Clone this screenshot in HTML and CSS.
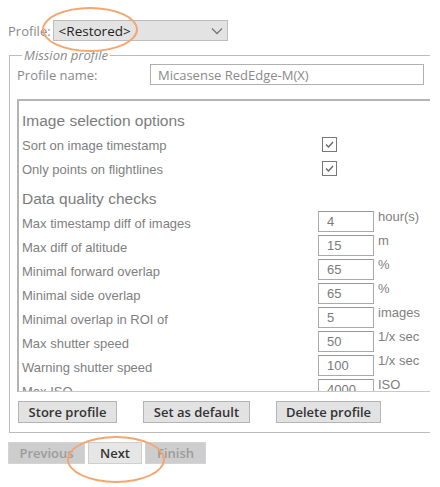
FILE: index.html
```html
<!DOCTYPE html>
<html lang="en">

<head>
    <meta charset="UTF-8">
    <title>Mission profile</title>
    <link rel="stylesheet" href="styles.css">
</head>

<body>
    <div class="page">
        <div class="profile-row">
            <label>Profile:</label>
            <div class="select">
                <span>&lt;Restored&gt;</span>
                <svg width="12" height="8" viewBox="0 0 12 8"><path d="M1 1.5 L6 6.5 L11 1.5" fill="none" stroke="#777" stroke-width="1.3"/></svg>
            </div>
        </div>

        <fieldset class="mission">
            <legend>Mission profile</legend>
            <div class="name-row">
                <label>Profile name:</label>
                <input class="name-input" value="Micasense RedEdge-M(X)">
            </div>

            <div class="panel">
                <h3>Image selection options</h3>
                <div class="row">
                    <span class="label">Sort on image timestamp</span>
                    <span class="check"><svg width="13" height="13" viewBox="0 0 13 13"><path d="M3 6.5 L5.5 9 L10 4" fill="none" stroke="#666" stroke-width="1.3"/></svg></span>
                </div>
                <div class="row">
                    <span class="label">Only points on flightlines</span>
                    <span class="check"><svg width="13" height="13" viewBox="0 0 13 13"><path d="M3 6.5 L5.5 9 L10 4" fill="none" stroke="#666" stroke-width="1.3"/></svg></span>
                </div>

                <h3 class="second">Data quality checks</h3>
                <div class="row">
                    <span class="label">Max timestamp diff of images</span>
                    <input class="num" value="4"><span class="unit">hour(s)</span>
                </div>
                <div class="row">
                    <span class="label">Max diff of altitude</span>
                    <input class="num" value="15"><span class="unit">m</span>
                </div>
                <div class="row">
                    <span class="label">Minimal forward overlap</span>
                    <input class="num" value="65"><span class="unit">%</span>
                </div>
                <div class="row">
                    <span class="label">Minimal side overlap</span>
                    <input class="num" value="65"><span class="unit">%</span>
                </div>
                <div class="row">
                    <span class="label">Minimal overlap in ROI of</span>
                    <input class="num" value="5"><span class="unit">images</span>
                </div>
                <div class="row">
                    <span class="label">Max shutter speed</span>
                    <input class="num" value="50"><span class="unit">1/x sec</span>
                </div>
                <div class="row">
                    <span class="label">Warning shutter speed</span>
                    <input class="num" value="100"><span class="unit">1/x sec</span>
                </div>
                <div class="row">
                    <span class="label">Max ISO</span>
                    <input class="num" value="4000"><span class="unit">ISO</span>
                </div>
            </div>

            <div class="actions">
                <button class="store">Store profile</button>
                <button class="default">Set as default</button>
                <button class="delete">Delete profile</button>
            </div>
        </fieldset>

        <div class="nav">
            <button class="prev" disabled>Previous</button>
            <button class="next">Next</button>
            <button class="finish" disabled>Finish</button>
        </div>

        <div class="mark mark-profile"></div>
        <div class="mark mark-next"></div>
    </div>
</body>

</html>
```

FILE: styles.css
```css
* {
    box-sizing: border-box;
}

body {
    margin: 0;
    background: #fff;
    font-family: 'Open Sans', sans-serif;
}

.page {
    position: relative;
    width: 430px;
    height: 487px;
    overflow: hidden;
    padding: 20px 0 0 8px;
}

.profile-row {
    display: flex;
    align-items: center;
    gap: 2px;
    height: 21px;

    label {
        font-size: 13px;
        color: #8a8a8a;
    }

    .select {
        display: flex;
        align-items: center;
        justify-content: space-between;
        width: 175px;
        height: 21px;
        padding: 0 4px 0 5px;
        background: #e3e3e3;
        border: 1px solid #bdbdbd;
        font-size: 13.5px;
        color: #222;
    }
}

.mission {
    margin: 7px -20px 0 1px;
    padding: 2px 0 9px 7px;
    border: 1px solid #bcbcbc;
    box-shadow: inset 1px 1px 0 #fff;

    legend {
        margin-left: 5px;
        padding: 0 2px;
        font-size: 13px;
        font-style: italic;
        color: #8a8a8a;
        line-height: 14px;
    }
}

.name-row {
    display: flex;
    align-items: center;
    height: 21px;

    label {
        width: 133px;
        font-size: 13px;
        color: #8a8a8a;
    }
}

.name-input {
    width: 274px;
    height: 21px;
    padding: 0 7px;
    border: 1px solid #b0b0b0;
    font-family: 'Open Sans', sans-serif;
    font-size: 13px;
    color: #8a8a8a;
}

.panel {
    height: 293px;
    margin-top: 14px;
    margin-right: -10px;
    padding: 8px 0 0 3px;
    overflow: hidden;
    border: 2px solid #b4b4b4;
    border-right-color: #ddd;
    border-bottom: 1px solid #c8c8c8;
    font-family: 'Liberation Sans', sans-serif;
    color: #808080;

    h3 {
        margin: 0;
        height: 24px;
        line-height: 24px;
        font-size: 15.5px;
        font-weight: normal;
        color: #7c7c7c;
    }

    .second {
        margin-top: 6px;
    }
}

.row {
    display: grid;
    grid-template-columns: 292px 56px auto;
    column-gap: 4px;
    height: 24px;

    .label {
        align-self: center;
        font-size: 13px;
    }

    .check {
        display: flex;
        align-items: center;
        justify-content: center;
        width: 15px;
        height: 15px;
        margin: 4px 0 0 4px;
        border: 1px solid #777;
        background: #fff;
    }

    .num {
        width: 56px;
        height: 21px;
        padding: 0 8px;
        border: 1px solid #aaa;
        border-top-color: #999;
        font-family: 'Liberation Sans', sans-serif;
        font-size: 13px;
        color: #7a7a7a;
    }

    .unit {
        font-size: 13px;
        line-height: 11px;
    }
}

.actions {
    display: flex;
    gap: 26px;
    margin-top: 9px;
    padding-left: 1px;
}

button {
    height: 22px;
    padding: 0;
    background: #e2e2e2;
    border: 1px solid #b4b4b4;
    font-family: 'Open Sans', sans-serif;
    font-size: 13px;
    font-weight: 600;
    color: #333;
}

.store {
    width: 99px;
}

.default {
    width: 107px;
}

.delete {
    width: 105px;
}

.nav {
    display: flex;
    gap: 3px;
    margin-top: 9px;

    .prev {
        width: 77px;
    }

    .next {
        width: 54px;
        background: #e6e6e6;
        border-color: #cfcfcf;
    }

    .finish {
        width: 61px;
    }

    button[disabled] {
        background: #cdcdcd;
        border-color: #d4d4d4;
        color: #9c9c9c;
    }
}

.mark {
    position: absolute;
    border: 2.5px solid #f2a670;
    border-radius: 50%;
}

.mark-profile {
    left: 42px;
    top: 7px;
    width: 96px;
    height: 45px;
}

.mark-next {
    left: 67px;
    top: 436px;
    width: 98px;
    height: 47px;
}
```
